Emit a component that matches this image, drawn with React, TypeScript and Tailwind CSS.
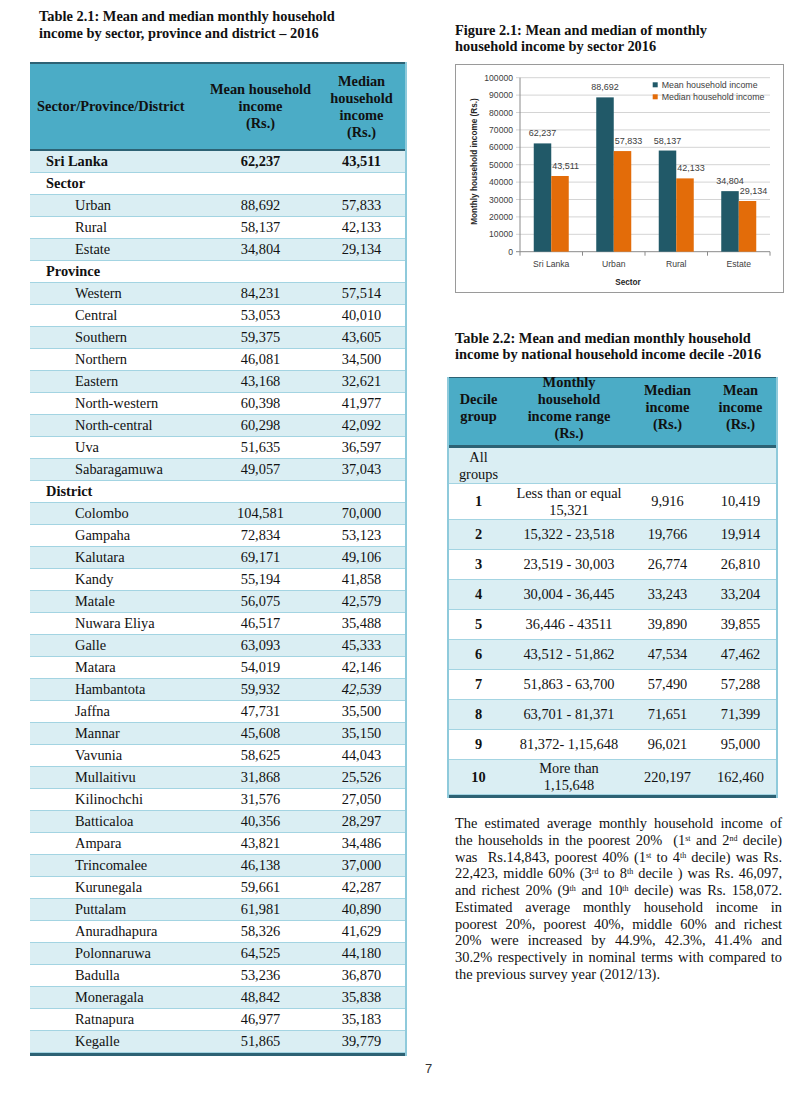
import React from 'react';

// Table 2.1 rows: kind decides indent / weight
type Row = {
  label: string;
  mean?: string;
  median?: string;
  kind: 'total' | 'section' | 'item';
  italicMedian?: boolean;
};

const rows: Row[] = [
  { label: 'Sri Lanka', mean: '62,237', median: '43,511', kind: 'total' },
  { label: 'Sector', kind: 'section' },
  { label: 'Urban', mean: '88,692', median: '57,833', kind: 'item' },
  { label: 'Rural', mean: '58,137', median: '42,133', kind: 'item' },
  { label: 'Estate', mean: '34,804', median: '29,134', kind: 'item' },
  { label: 'Province', kind: 'section' },
  { label: 'Western', mean: '84,231', median: '57,514', kind: 'item' },
  { label: 'Central', mean: '53,053', median: '40,010', kind: 'item' },
  { label: 'Southern', mean: '59,375', median: '43,605', kind: 'item' },
  { label: 'Northern', mean: '46,081', median: '34,500', kind: 'item' },
  { label: 'Eastern', mean: '43,168', median: '32,621', kind: 'item' },
  { label: 'North-western', mean: '60,398', median: '41,977', kind: 'item' },
  { label: 'North-central', mean: '60,298', median: '42,092', kind: 'item' },
  { label: 'Uva', mean: '51,635', median: '36,597', kind: 'item' },
  { label: 'Sabaragamuwa', mean: '49,057', median: '37,043', kind: 'item' },
  { label: 'District', kind: 'section' },
  { label: 'Colombo', mean: '104,581', median: '70,000', kind: 'item' },
  { label: 'Gampaha', mean: '72,834', median: '53,123', kind: 'item' },
  { label: 'Kalutara', mean: '69,171', median: '49,106', kind: 'item' },
  { label: 'Kandy', mean: '55,194', median: '41,858', kind: 'item' },
  { label: 'Matale', mean: '56,075', median: '42,579', kind: 'item' },
  { label: 'Nuwara Eliya', mean: '46,517', median: '35,488', kind: 'item' },
  { label: 'Galle', mean: '63,093', median: '45,333', kind: 'item' },
  { label: 'Matara', mean: '54,019', median: '42,146', kind: 'item' },
  { label: 'Hambantota', mean: '59,932', median: '42,539', kind: 'item', italicMedian: true },
  { label: 'Jaffna', mean: '47,731', median: '35,500', kind: 'item' },
  { label: 'Mannar', mean: '45,608', median: '35,150', kind: 'item' },
  { label: 'Vavunia', mean: '58,625', median: '44,043', kind: 'item' },
  { label: 'Mullaitivu', mean: '31,868', median: '25,526', kind: 'item' },
  { label: 'Kilinochchi', mean: '31,576', median: '27,050', kind: 'item' },
  { label: 'Batticaloa', mean: '40,356', median: '28,297', kind: 'item' },
  { label: 'Ampara', mean: '43,821', median: '34,486', kind: 'item' },
  { label: 'Trincomalee', mean: '46,138', median: '37,000', kind: 'item' },
  { label: 'Kurunegala', mean: '59,661', median: '42,287', kind: 'item' },
  { label: 'Puttalam', mean: '61,981', median: '40,890', kind: 'item' },
  { label: 'Anuradhapura', mean: '58,326', median: '41,629', kind: 'item' },
  { label: 'Polonnaruwa', mean: '64,525', median: '44,180', kind: 'item' },
  { label: 'Badulla', mean: '53,236', median: '36,870', kind: 'item' },
  { label: 'Moneragala', mean: '48,842', median: '35,838', kind: 'item' },
  { label: 'Ratnapura', mean: '46,977', median: '35,183', kind: 'item' },
  { label: 'Kegalle', mean: '51,865', median: '39,779', kind: 'item' },
];

// Table 2.2 deciles
const deciles = [
  { group: '1', range: ['Less than or equal', '15,321'], median: '9,916', mean: '10,419', h: 'h-[36px]' },
  { group: '2', range: ['15,322 - 23,518'], median: '19,766', mean: '19,914', h: 'h-[30px]' },
  { group: '3', range: ['23,519 - 30,003'], median: '26,774', mean: '26,810', h: 'h-[30px]' },
  { group: '4', range: ['30,004 - 36,445'], median: '33,243', mean: '33,204', h: 'h-[30px]' },
  { group: '5', range: ['36,446 - 43511'], median: '39,890', mean: '39,855', h: 'h-[30px]' },
  { group: '6', range: ['43,512 - 51,862'], median: '47,534', mean: '47,462', h: 'h-[30px]' },
  { group: '7', range: ['51,863 - 63,700'], median: '57,490', mean: '57,288', h: 'h-[30px]' },
  { group: '8', range: ['63,701 - 81,371'], median: '71,651', mean: '71,399', h: 'h-[30px]' },
  { group: '9', range: ['81,372- 1,15,648'], median: '96,021', mean: '95,000', h: 'h-[30px]' },
  { group: '10', range: ['More than', '1,15,648'], median: '220,197', mean: '162,460', h: 'h-[35px]' },
];

const sectors = [
  { name: 'Sri Lanka', mean: 62237, median: 43511 },
  { name: 'Urban', mean: 88692, median: 57833 },
  { name: 'Rural', mean: 58137, median: 42133 },
  { name: 'Estate', mean: 34804, median: 29134 },
];

const fmt = (n: number) => n.toLocaleString('en-US');

function IncomeChart() {
  const x0 = 65;
  const x1 = 315;
  const yBase = 187.7;
  const step = 17.4; // px per 10000
  const catW = (x1 - x0) / 4;
  const barW = 17.5;
  const font = 'Liberation Sans, Arial, sans-serif';
  const yOf = (v: number) => yBase - (v / 10000) * step;

  return (
    <svg width={329} height={229} viewBox="0 0 329 229" fontFamily={font}>
      <rect x={0.5} y={0.5} width={328} height={228} fill="#fff" stroke="#9a9a9a" />
      {Array.from({ length: 11 }, (_, k) => {
        const y = yBase - k * step;
        return (
          <g key={k}>
            <line x1={x0 - 4} x2={x1} y1={y} y2={y} stroke={k === 0 ? '#8a8a8a' : '#d4d4d4'} strokeWidth={1} />
            <text x={58} y={y + 3} fontSize={8.6} textAnchor="end" fill="#404040">
              {k * 10000}
            </text>
          </g>
        );
      })}
      <line x1={x0} x2={x0} y1={yBase - 10 * step} y2={yBase} stroke="#8a8a8a" />
      {[0, 1, 2, 3, 4].map((i) => (
        <line key={i} x1={x0 + i * catW} x2={x0 + i * catW} y1={yBase} y2={yBase + 4} stroke="#8a8a8a" />
      ))}
      {sectors.map((s, i) => {
        const mx = x0 + i * catW + (catW - 2 * barW) / 2;
        const dx = mx + barW;
        return (
          <g key={s.name}>
            <rect x={mx} y={yOf(s.mean)} width={barW} height={yBase - yOf(s.mean)} fill="#215968" />
            <rect x={dx} y={yOf(s.median)} width={barW} height={yBase - yOf(s.median)} fill="#e36c09" />
            <text x={mx + barW / 2} y={yOf(s.mean) - 7} fontSize={9} textAnchor="middle" fill="#404040">
              {fmt(s.mean)}
            </text>
            <text x={dx + 1} y={yOf(s.median) - 7} fontSize={9} fill="#404040">
              {fmt(s.median)}
            </text>
            <text x={x0 + i * catW + catW / 2} y={203} fontSize={8.6} textAnchor="middle" fill="#404040">
              {s.name}
            </text>
          </g>
        );
      })}
      <rect x={197.7} y={18.3} width={5} height={5} fill="#215968" />
      <text x={206.7} y={24} fontSize={8.8} fill="#404040">Mean household income</text>
      <rect x={197.7} y={30.3} width={5} height={5} fill="#e36c09" />
      <text x={206.7} y={36} fontSize={8.8} fill="#404040">Median household income</text>
      <text x={173} y={221} fontSize={8.2} fontWeight="bold" textAnchor="middle" fill="#262626">
        Sector
      </text>
      <text
        x={20}
        y={97.5}
        fontSize={8.2}
        fontWeight="bold"
        textAnchor="middle"
        dominantBaseline="middle"
        fill="#262626"
        transform="rotate(-90 20 97.5)"
      >
        Monthly household income (Rs.)
      </text>
    </svg>
  );
}

// one justified line of the paragraph
function Line({ children, last = false }: { children: React.ReactNode; last?: boolean }) {
  return (
    <div className={last ? 'whitespace-nowrap' : 'whitespace-nowrap text-justify [text-align-last:justify]'}>
      {children}
    </div>
  );
}

const Sup = ({ children }: { children: React.ReactNode }) => <sup className="text-[8px]">{children}</sup>;

export default function App() {
  return (
    <div className="w-[800px] h-[1120px] bg-white text-[#111] font-['Liberation_Serif','Times_New_Roman',serif] text-[14.4px]">
      <div className="flex items-start">
        {/* left: table 2.1 */}
        <div className="ml-[30px] w-[377px]">
          <h2 className="pt-[8px] pl-[9px] font-bold leading-[16.6px]">
            Table 2.1: Mean and median monthly household
            <br />
            income by sector, province and district – 2016
          </h2>

          <div className="mt-[21px] border-r-2 border-[#8fcadb]">
            <div className="flex h-[89px] items-center bg-[#4bacc6] border-t-2 border-b-2 border-[#2d6274] font-bold leading-[17px]">
              <div className="w-[173px] pl-[7px]">Sector/Province/District</div>
              <div className="w-[115px] text-center">
                Mean household
                <br />
                income
                <br />
                (Rs.)
              </div>
              <div className="w-[87px] text-center">
                Median
                <br />
                household
                <br />
                income
                <br />
                (Rs.)
              </div>
            </div>

            {rows.map((r, i) => (
              <div
                key={r.label}
                className={`flex h-[22px] items-center border-b border-[#a3d4e2] ${i % 2 === 0 ? 'bg-[#daeef3]' : 'bg-white'} ${
                  r.kind === 'total' ? 'font-bold' : ''
                }`}
              >
                <div className={`w-[173px] ${r.kind === 'item' ? 'pl-[45px]' : 'pl-[16px] font-bold'}`}>{r.label}</div>
                <div className="w-[115px] text-center">{r.mean}</div>
                <div className={`w-[87px] text-center ${r.italicMedian ? 'italic' : ''}`}>{r.median}</div>
              </div>
            ))}
            <div className="h-[3px] bg-[#2d6274]" />
          </div>
        </div>

        {/* right: figure, table 2.2 and text */}
        <div className="ml-[40px] w-[337px] pt-[22px]">
          <h2 className="pl-[8px] font-bold leading-[16px]">
            Figure 2.1: Mean and median of monthly
            <br />
            household income by sector 2016
          </h2>
          <div className="mt-[10px] ml-[8px]">
            <IncomeChart />
          </div>

          <h2 className="mt-[37px] pl-[8px] font-bold leading-[16px]">
            Table 2.2: Mean and median monthly household
            <br />
            income by national household income decile -2016
          </h2>

          <div className="mt-[15px] w-[331px] border-l-2 border-r-2 border-[#8fcadb]">
            <div className="flex h-[71px] items-center bg-[#4bacc6] border-t border-b-[3px] border-[#2d6274] font-bold leading-[17px] text-center">
              <div className="w-[59px] pb-[8px]">
                Decile
                <br />
                group
              </div>
              <div className="w-[122px] pb-[8px]">
                Monthly
                <br />
                household
                <br />
                income range
                <br />
                (Rs.)
              </div>
              <div className="w-[75px] pb-[8px]">
                Median
                <br />
                income
                <br />
                (Rs.)
              </div>
              <div className="w-[71px] pb-[8px]">
                Mean
                <br />
                income
                <br />
                (Rs.)
              </div>
            </div>

            <div className="flex h-[36px] items-center bg-[#daeef3] border-b border-[#a3d4e2] leading-[17px]">
              <div className="w-[59px] text-center">
                All
                <br />
                groups
              </div>
            </div>

            {deciles.map((d, i) => (
              <div
                key={d.group}
                className={`flex ${d.h} items-center text-center leading-[17px] border-b border-[#a3d4e2] ${
                  i % 2 === 0 ? 'bg-white' : 'bg-[#daeef3]'
                }`}
              >
                <div className="w-[59px] font-bold">{d.group}</div>
                <div className="w-[122px]">
                  {d.range.map((l) => (
                    <div key={l}>{l}</div>
                  ))}
                </div>
                <div className="w-[75px]">{d.median}</div>
                <div className="w-[71px]">{d.mean}</div>
              </div>
            ))}
            <div className="h-[3px] bg-[#2d6274]" />
          </div>

          <div className="mt-[17px] ml-[8px] w-[327px] leading-[16.75px]">
            <Line>The estimated average monthly household income of</Line>
            <Line>
              the households in the poorest 20%&nbsp; (1<Sup>st</Sup> and 2<Sup>nd</Sup> decile)
            </Line>
            <Line>
              was&nbsp; Rs.14,843, poorest 40% (1<Sup>st</Sup> to 4<Sup>th</Sup> decile) was Rs.
            </Line>
            <Line>
              22,423, middle 60% (3<Sup>rd</Sup> to 8<Sup>th</Sup> decile ) was Rs. 46,097,
            </Line>
            <Line>
              and richest 20% (9<Sup>th</Sup> and 10<Sup>th</Sup> decile) was Rs. 158,072.
            </Line>
            <Line>Estimated average monthly household income in</Line>
            <Line>poorest 20%, poorest 40%, middle 60% and richest</Line>
            <Line>20% were increased by 44.9%, 42.3%, 41.4% and</Line>
            <Line>30.2% respectively in nominal terms with compared to</Line>
            <Line last>the previous survey year (2012/13).</Line>
          </div>
        </div>
      </div>

      <div className="mt-[5px] pl-[425px] text-[13px] leading-[16px] text-[#333] font-['Liberation_Sans',Arial,sans-serif]">7</div>
    </div>
  );
}
